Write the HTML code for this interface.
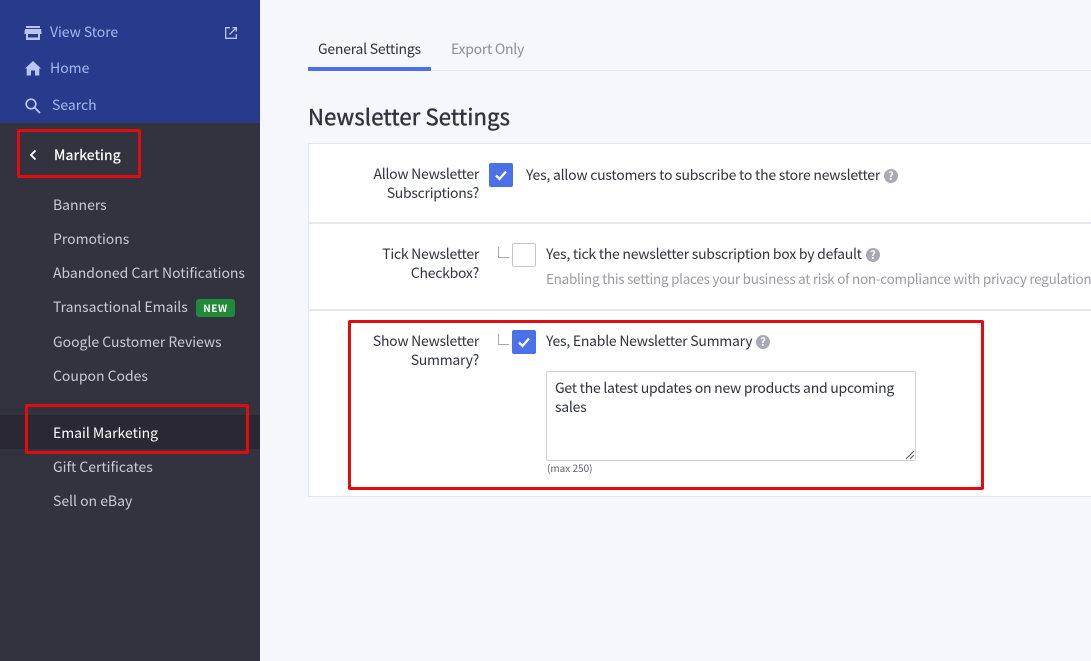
<!DOCTYPE html>
<html><head><meta charset="utf-8">
<style>
*{box-sizing:border-box}
html,body{margin:0;padding:0}
body{width:1091px;height:661px;position:relative;overflow:hidden;background:#f6f7fc;font-family:"Noto Sans CJK JP","Liberation Sans",sans-serif;font-size:14px;color:#313440}
.a{position:absolute;white-space:nowrap;line-height:20px;letter-spacing:-.25px}
.a.n{left:53px;color:#c8cad4;letter-spacing:-.02px}
.a.r{text-align:right;right:612px;color:#313440;letter-spacing:-.27px}
.box{position:absolute;background:#fff;left:308px;width:800px}
.cb{position:absolute;width:24px;height:24px;border-radius:2px;background:#4b71ea}
.red{position:absolute;border:3px solid #e30b0f;border-radius:2px}
.l{position:absolute;width:11px;height:11px;border-left:1px solid #a4a6b0;border-bottom:1px solid #a4a6b0}
.q{position:absolute;width:14px;height:14px;border-radius:50%;background:#a8a9b5;color:#fff;font-size:11px;font-weight:700;line-height:14px;text-align:center}
</style></head><body>
<div style="position:absolute;left:0;top:0;width:260px;height:661px;background:#33323f"></div>
<div style="position:absolute;left:0;top:0;width:260px;height:123px;background:#283a8c"></div>
<div style="position:absolute;left:0;top:415px;width:260px;height:34px;background:#292833"></div>

<svg style="position:absolute;left:24px;top:24px" width="18" height="18" viewBox="0 0 18 18"><path fill="#b8c6f4" d="M2 2h14v2H2zM1 5h16l.5 3.500V10H16v6H2v-6H.5V8.500zM4 10v3.500h10V10z"/></svg>
<div class="a" style="left:50px;top:22px;color:#a5b8f5;letter-spacing:-.05px">View Store</div>
<svg style="position:absolute;left:224px;top:26px" width="14" height="14" viewBox="0 0 14 14"><path fill="none" stroke="#b8c6f4" stroke-width="1.300" d="M6 1.700H1.700v10.600h10.600V8M5.500 8.500L12 2M8.500 1.700h3.800v3.800"/></svg>

<svg style="position:absolute;left:24px;top:60px" width="18" height="16" viewBox="0 0 18 16"><path fill="#b8c6f4" d="M7 15.500v-5h4v5h4.300V8.500H17L9 1 1 8.500h1.700v7z"/></svg>
<div class="a" style="left:50px;top:58px;color:#a5b8f5;letter-spacing:0">Home</div>

<svg style="position:absolute;left:24px;top:97px" width="18" height="17" viewBox="0 0 18 17"><circle cx="7" cy="7" r="4.800" fill="none" stroke="#b8c6f4" stroke-width="1.700"/><path d="M10.500 10.500L16 16" stroke="#b8c6f4" stroke-width="1.900" fill="none"/></svg>
<div class="a" style="left:52px;top:95px;color:#a5b8f5;letter-spacing:0">Search</div>

<svg style="position:absolute;left:28px;top:149px" width="10" height="12" viewBox="0 0 10 12"><path d="M7.500 1.500L3 6l4.500 4.500" fill="none" stroke="#fff" stroke-width="1.800"/></svg>
<div class="a" style="left:54px;top:145px;color:#fff;letter-spacing:.17px;-webkit-text-stroke:.25px #fff">Marketing</div>

<div class="a n" style="top:195px">Banners</div>
<div class="a n" style="top:229px">Promotions</div>
<div class="a n" style="top:263px">Abandoned Cart Notifications</div>
<div class="a n" style="top:297px">Transactional Emails</div>
<div class="a" style="left:196px;top:299px;width:39px;height:18px;background:#208a38;border-radius:3px;color:#fff;font-size:10px;font-weight:700;line-height:18px;text-align:center;letter-spacing:.6px">NEW</div>
<div class="a n" style="top:332px">Google Customer Reviews</div>
<div class="a n" style="top:366px">Coupon Codes</div>
<div class="a n" style="top:423px;color:#fff">Email Marketing</div>
<div class="a n" style="top:457px">Gift Certificates</div>
<div class="a n" style="top:491px">Sell on eBay</div>

<div class="red" style="left:17px;top:129px;width:124px;height:49px"></div>
<div class="red" style="left:25px;top:404px;width:224px;height:50px"></div>

<div style="position:absolute;left:308px;top:70px;width:783px;height:1px;background:#e3e5ef"></div>
<div style="position:absolute;left:308px;top:67px;width:123px;height:4px;background:#4b71ea"></div>
<div class="a" style="left:318px;top:39px;color:#313440;letter-spacing:-.25px">General Settings</div>
<div class="a" style="left:451px;top:39px;color:#8c8d98;letter-spacing:-.27px">Export Only</div>
<div class="a" style="left:308px;top:101px;font-size:22px;line-height:30px;letter-spacing:.16px;-webkit-text-stroke:.45px #313440;color:#313440">Newsletter Settings</div>

<div class="box" style="top:143px;height:354px;border:1px solid #e3e5ef"></div>
<div style="position:absolute;left:309px;top:222px;width:782px;height:2px;background:#e6e7ee"></div>
<div style="position:absolute;left:309px;top:309px;width:782px;height:2px;background:#e6e7ee"></div>

<div class="a r" style="top:164px">Allow Newsletter</div>
<div class="a r" style="top:183px">Subscriptions?</div>
<div class="cb" style="left:489px;top:163px"><svg width="24" height="24" viewBox="0 0 24 24"><path d="M7 12.500l3.500 3.500L17 8.500" fill="none" stroke="#fff" stroke-width="2.300"/></svg></div>
<div class="a" style="left:526px;top:165px;letter-spacing:-.23px">Yes, allow customers to subscribe to the store newsletter</div>
<div class="q" style="left:884px;top:169px">?</div>

<div class="a r" style="top:244px">Tick Newsletter</div>
<div class="a r" style="top:263px">Checkbox?</div>
<div class="l" style="left:498px;top:247px"></div>
<div class="cb" style="left:512px;top:243px;background:#fff;border:1px solid #c4c6ce"></div>
<div class="a" style="left:546px;top:244px">Yes, tick the newsletter subscription box by default</div>
<div class="q" style="left:866px;top:248px">?</div>
<div class="a" style="left:546px;top:268px;color:#9b9ca6;font-size:13.5px;letter-spacing:-.27px">Enabling this setting places your business at risk of non-compliance with privacy regulations</div>

<div class="a r" style="top:331px">Show Newsletter</div>
<div class="a r" style="top:350px">Summary?</div>
<div class="l" style="left:498px;top:334px"></div>
<div class="cb" style="left:512px;top:330px"><svg width="24" height="24" viewBox="0 0 24 24"><path d="M7 12.500l3.500 3.500L17 8.500" fill="none" stroke="#fff" stroke-width="2.300"/></svg></div>
<div class="a" style="left:546px;top:331px">Yes, Enable Newsletter Summary</div>
<div class="q" style="left:756px;top:335px">?</div>

<div style="position:absolute;left:546px;top:371px;width:370px;height:90px;background:#fff;border:1px solid #d0d1d8;border-radius:2px"></div>
<div class="a" style="left:555px;top:378px">Get the latest updates on new products and upcoming</div>
<div class="a" style="left:555px;top:397px">sales</div>
<svg style="position:absolute;left:905px;top:450px" width="10" height="10" viewBox="0 0 10 10"><path d="M1 9L9 1M5 9L9 5" stroke="#555" stroke-width="1"/></svg>
<div class="a" style="left:547px;top:459px;font-size:10px;line-height:18px;color:#5d5e6a;letter-spacing:0">(max 250)</div>

<div class="red" style="left:348px;top:320px;width:636px;height:170px"></div>
</body></html>
